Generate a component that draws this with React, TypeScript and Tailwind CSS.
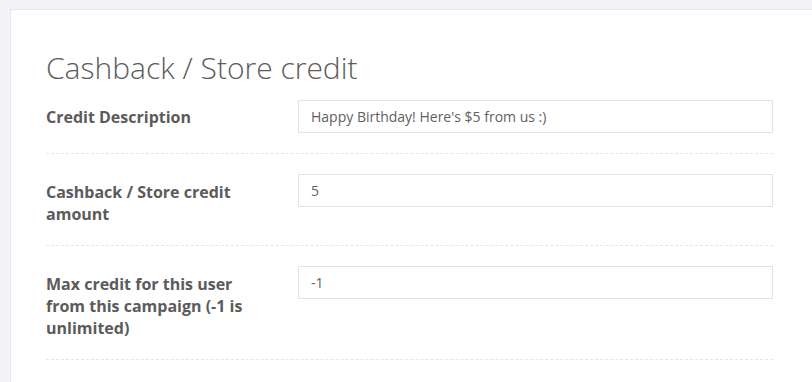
const rows = [
  { label: 'Credit Description', value: "Happy Birthday! Here's $5 from us :)" },
  { label: 'Cashback / Store credit amount', value: '5' },
  { label: 'Max credit for this user from this campaign (-1 is unlimited)', value: '-1' },
]

const FormRow = ({ label, value }: { label: string; value: string }) => {
  return (
    <div className="group grid grid-cols-[252px_475px] border-b border-dashed border-[#e6e6e6] pb-5 pt-5 first:pt-0">
      <label className="pt-[7px] group-first:pt-[6px] pr-[30px] text-[16px] leading-[22px] font-bold text-[#5b5b5b]">{label}</label>
      <div className="h-[33px] border border-[#e3e3e3] bg-white px-[12px] flex items-center text-[14px] text-[#5f5f5f]">
        {value}
      </div>
    </div>
  )
}

export default function App() {
  return (
    <div className="h-[382px] w-[812px] overflow-hidden bg-[#f3f4f7] pl-[10px] pt-[9px] font-['Open_Sans',sans-serif]">
      <div className="w-[840px] h-[400px] border border-[#e4e6ea] bg-white pl-[35px] pt-[40px]">
        <h2 className="text-[30px] leading-[36px] font-light text-[#5c5c5c] mb-[14px]">Cashback / Store credit</h2>
        <div className="w-[727px]">
          {rows.map((r, i) => (
            <FormRow key={i} label={r.label} value={r.value} />
          ))}
        </div>
      </div>
    </div>
  )
}
